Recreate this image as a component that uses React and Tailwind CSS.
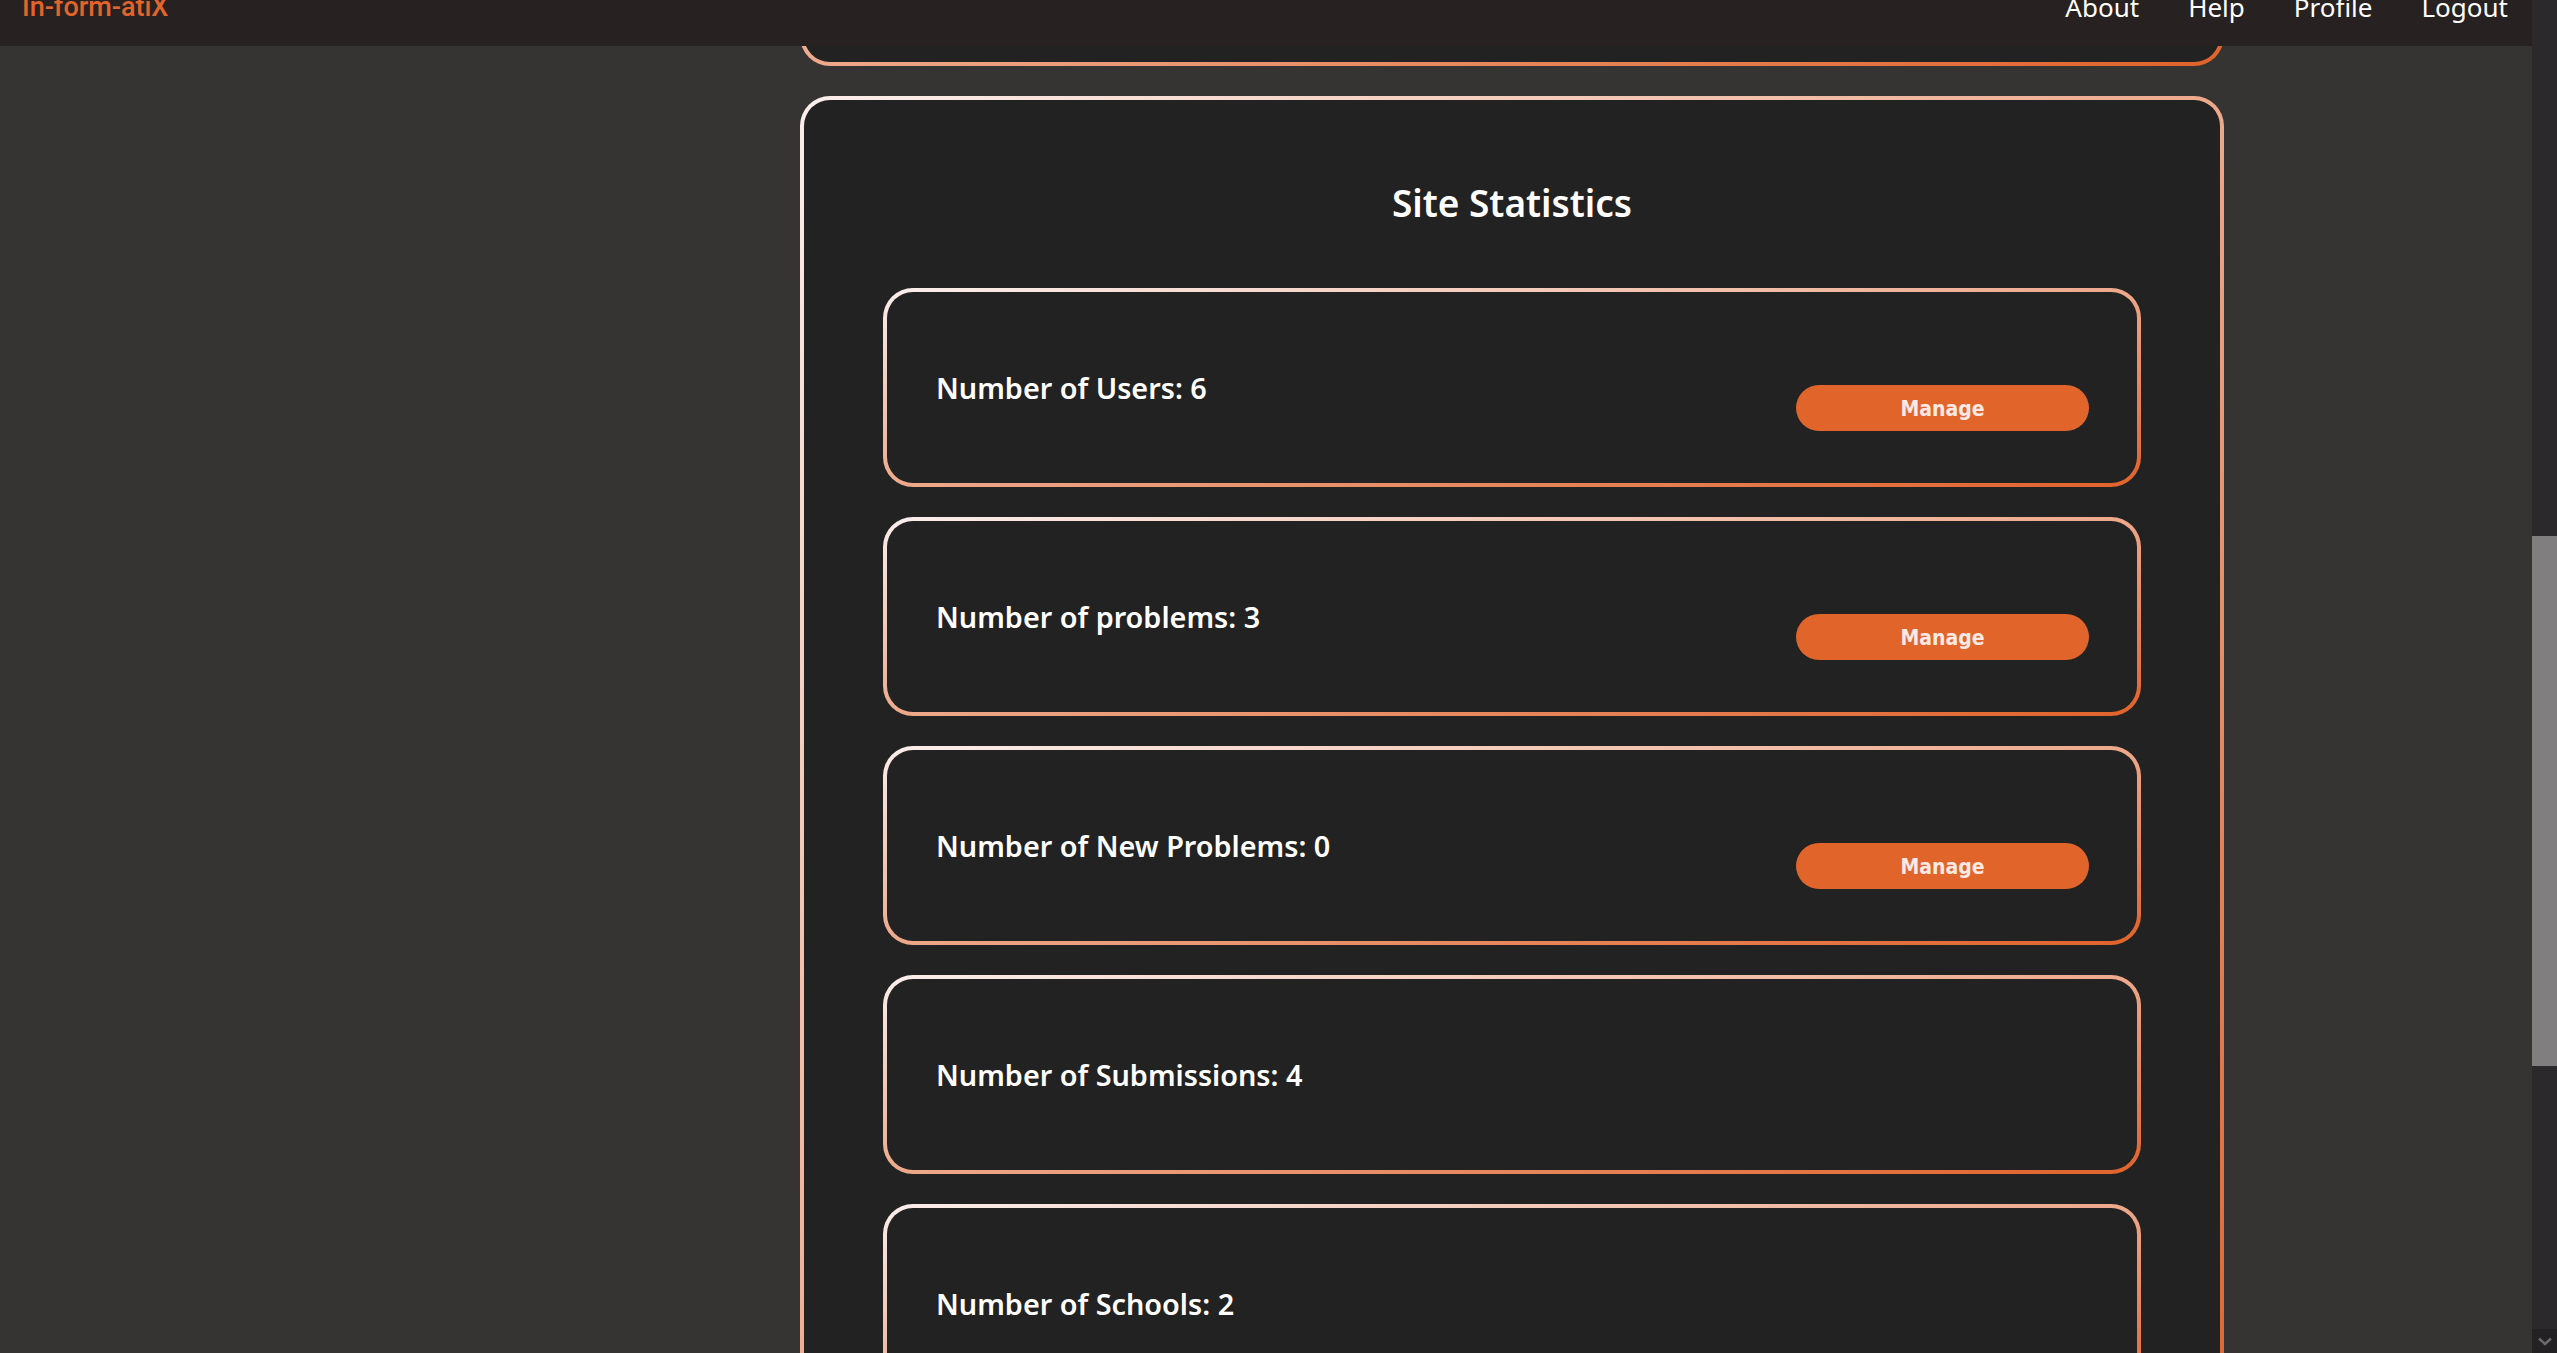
import React from 'react';

const stats = [
  { label: 'Number of Users', value: 6, manage: true },
  { label: 'Number of problems', value: 3, manage: true },
  { label: 'Number of New Problems', value: 0, manage: true },
  { label: 'Number of Submissions', value: 4, manage: false },
  { label: 'Number of Schools', value: 2, manage: false },
];

const frame =
  'border-4 border-transparent rounded-[30px] [background:linear-gradient(#222222,#222222)_padding-box,linear-gradient(to_bottom_right,#fbefec,#e0622a)_border-box]';

const StatCard = ({ label, value, manage }) => (
  <div className={`${frame} h-[199px] shrink-0 flex items-center justify-between pl-[49px] pr-[48px]`}>
    <span className="text-[28.8px] font-semibold text-white">
      {label}: {value}
    </span>
    {manage && (
      <button className="mt-[40px] w-[293px] h-[46px] rounded-full bg-[#e1652b] text-[#fbe9e5] text-[21px] leading-none pt-[3px] font-bold font-['DejaVu_Sans_Condensed','DejaVu_Sans',sans-serif]">
        Manage
      </button>
    )}
  </div>
);

export default function App() {
  return (
    <div className="h-screen flex overflow-hidden bg-[#353432] font-['Noto_Sans',sans-serif]">
      <div className="flex-1 min-w-0 flex flex-col">
        <header className="h-[46px] shrink-0 bg-[#272121] flex items-start justify-between pl-[22px] pr-[24px] overflow-hidden">
          <span className="-mt-[6px] leading-none text-[27px] font-medium text-[#e2642b] font-['Roboto',sans-serif]">
            In-form-atiX
          </span>
          <nav className="-mt-[6px] flex gap-[49px] leading-none text-[26px] text-white">
            <a>About</a>
            <a>Help</a>
            <a>Profile</a>
            <a>Logout</a>
          </nav>
        </header>

        <main className="flex-1 overflow-hidden pl-[800px]">
          <div className="w-[1424px] flex flex-col gap-[30px]">
            {/* previous panel, scrolled mostly out of view */}
            <div className="h-[20px] overflow-hidden flex flex-col justify-end">
              <div className={`${frame} h-[400px] shrink-0`} />
            </div>

            <section className={`${frame} pt-[84px] px-[79px] pb-[60px]`}>
              <h2 className="text-center text-[37px] leading-none font-semibold text-white mb-[67px]">
                Site Statistics
              </h2>
              <div className="flex flex-col gap-[30px]">
                {stats.map((s) => (
                  <StatCard key={s.label} {...s} />
                ))}
              </div>
            </section>
          </div>
        </main>
      </div>

      {/* scrollbar */}
      <div className="w-[25px] shrink-0 flex flex-col bg-[#2b292c]">
        <div className="h-[536px] shrink-0" />
        <div className="h-[530px] shrink-0 bg-[#807e7f]" />
        <div className="flex-1" />
        <div className="h-[24px] shrink-0 bg-[#232124] flex items-center justify-center">
          <svg width="14" height="9" viewBox="0 0 14 9">
            <path d="M1 1.5 L7 7 L13 1.5" fill="none" stroke="#6a696b" strokeWidth="2.5" />
          </svg>
        </div>
      </div>
    </div>
  );
}
